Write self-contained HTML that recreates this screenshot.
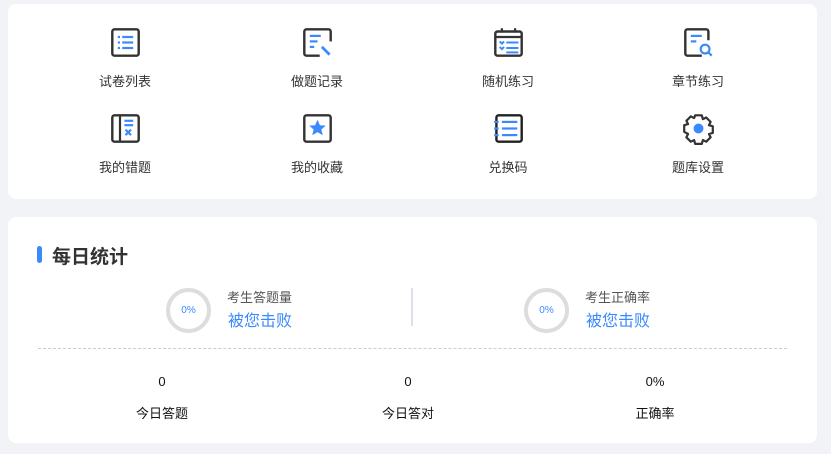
<!DOCTYPE html><html><head><meta charset="utf-8"><style>
body{margin:0;width:831px;height:454px;background:#f2f3f7;font-family:"Liberation Sans","Noto Sans CJK SC",sans-serif;position:relative;overflow:hidden}
.card{position:absolute;left:8px;width:809px;background:#fff;border-radius:8px}
.it{position:absolute;width:120px;text-align:center;font-size:13px;color:#333}
.it svg{display:block;margin:0 auto 12px}
.a{position:absolute}
</style></head><body>
<div class="card" style="top:4px;height:195px"></div>
<div class="card" style="top:217px;height:226px"></div>

<div class="it" style="left:65px;top:26px"><svg width="33" height="33" viewBox="0 0 30 30"><rect x="3" y="3" width="24" height="24" rx="2" fill="none" stroke="#333" stroke-width="2.2"/><g stroke="#3a8afe" stroke-width="2"><line x1="8" y1="10" x2="10" y2="10"/><line x1="12" y1="10" x2="22" y2="10"/><line x1="8" y1="15" x2="10" y2="15"/><line x1="12" y1="15" x2="22" y2="15"/><line x1="8" y1="20" x2="10" y2="20"/><line x1="12" y1="20" x2="22" y2="20"/></g></svg>试卷列表</div>
<div class="it" style="left:257px;top:26px"><svg width="33" height="33" viewBox="0 0 30 30"><path d="M27 14V5a2 2 0 0 0-2-2H5a2 2 0 0 0-2 2v20a2 2 0 0 0 2 2h12" fill="none" stroke="#333" stroke-width="2.2"/><g stroke="#3a8afe" stroke-width="2"><line x1="8" y1="9" x2="18" y2="9"/><line x1="8" y1="14" x2="15" y2="14"/><line x1="8" y1="19" x2="12" y2="19"/><line x1="19" y1="19" x2="26" y2="26" stroke-width="2.5"/></g></svg>做题记录</div>
<div class="it" style="left:448px;top:26px"><svg width="33" height="33" viewBox="0 0 30 30"><rect x="3" y="5" width="24" height="22" rx="2" fill="none" stroke="#333" stroke-width="2.2"/><g stroke="#333" stroke-width="2"><line x1="9" y1="2" x2="9" y2="6"/><line x1="21" y1="2" x2="21" y2="6"/><line x1="3" y1="10" x2="27" y2="10"/></g><g stroke="#3a8afe" stroke-width="1.8" fill="none"><path d="M7 14l2 2 2-2M7 19l2 2 2-2"/><line x1="13" y1="15" x2="24" y2="15"/><line x1="13" y1="20" x2="24" y2="20"/><line x1="13" y1="24" x2="24" y2="24"/></g></svg>随机练习</div>
<div class="it" style="left:638px;top:26px"><svg width="33" height="33" viewBox="0 0 30 30"><path d="M18 27H5a2 2 0 0 1-2-2V5a2 2 0 0 1 2-2h17a2 2 0 0 1 2 2v8" fill="none" stroke="#333" stroke-width="2.2"/><g stroke="#3a8afe" stroke-width="2" fill="none"><line x1="8" y1="9" x2="18" y2="9"/><line x1="8" y1="14" x2="13" y2="14"/><circle cx="21" cy="21" r="4"/><line x1="24" y1="24" x2="27" y2="27"/></g></svg>章节练习</div>

<div class="it" style="left:65px;top:112px"><svg width="33" height="33" viewBox="0 0 30 30"><rect x="3" y="3" width="24" height="24" rx="2" fill="none" stroke="#333" stroke-width="2.2"/><line x1="10" y1="3" x2="10" y2="27" stroke="#333" stroke-width="2"/><g stroke="#3a8afe" stroke-width="2"><line x1="14" y1="8" x2="22" y2="8"/><line x1="14" y1="12" x2="22" y2="12"/><path d="M15 16l5 5M20 16l-5 5"/></g></svg>我的错题</div>
<div class="it" style="left:257px;top:112px"><svg width="33" height="33" viewBox="0 0 30 30"><rect x="3" y="3" width="24" height="24" rx="2" fill="none" stroke="#333" stroke-width="2.2"/><path d="M15 7l2.2 5 5.3.4-4 3.5 1.3 5.2L15 18.3l-4.8 2.8 1.3-5.2-4-3.5 5.3-.4z" fill="#3a8afe"/></svg>我的收藏</div>
<div class="it" style="left:448px;top:112px"><svg width="33" height="33" viewBox="0 0 30 30"><rect x="4" y="3" width="23" height="24" rx="2" fill="none" stroke="#222" stroke-width="2.2"/><g stroke="#3a8afe" stroke-width="2"><line x1="2" y1="9" x2="6" y2="9"/><line x1="2" y1="15" x2="6" y2="15"/><line x1="2" y1="21" x2="6" y2="21"/><line x1="9" y1="9" x2="23" y2="9"/><line x1="9" y1="15" x2="23" y2="15"/><line x1="9" y1="21" x2="23" y2="21"/></g></svg>兑换码</div>
<div class="it" style="left:638px;top:112px"><svg width="33" height="33" viewBox="0 0 30 30"><path d="M12 3h6l1 3.5 3-1.5 4 4-1.5 3 3.5 1v6l-3.5 1 1.5 3-4 4-3-1.5-1 3.5h-6l-1-3.5-3 1.5-4-4 1.5-3L2 18v-6l3.5-1L4 8l4-4 3 1.5z" fill="none" stroke="#333" stroke-width="2" stroke-linejoin="round"/><circle cx="15" cy="15" r="4.5" fill="#3a8afe"/></svg>题库设置</div>

<div class="a" style="left:37px;top:246px;width:5px;height:17px;background:#3a8afe;border-radius:3px"></div>
<div class="a" style="left:52px;top:242px;font-size:19px;font-weight:bold;color:#333">每日统计</div>

<div class="a" style="left:166px;top:288px;width:37px;height:37px;border:4px solid #ddd;border-radius:50%;text-align:center;line-height:37px;font-size:10px;color:#3a8afe">0%</div>
<div class="a" style="left:227px;top:287px;font-size:13px;color:#555">考生答题量</div>
<div class="a" style="left:228px;top:307px;font-size:16px;color:#3a8afe">被您击败</div>
<div class="a" style="left:411px;top:288px;width:2px;height:38px;background:#dde0e8"></div>
<div class="a" style="left:524px;top:288px;width:37px;height:37px;border:4px solid #ddd;border-radius:50%;text-align:center;line-height:37px;font-size:10px;color:#3a8afe">0%</div>
<div class="a" style="left:585px;top:287px;font-size:13px;color:#555">考生正确率</div>
<div class="a" style="left:586px;top:307px;font-size:16px;color:#3a8afe">被您击败</div>
<div class="a" style="left:38px;top:348px;width:749px;border-top:1px dashed #ccc"></div>

<div class="a" style="left:112px;top:374px;width:100px;text-align:center;font-size:13px;color:#111">0</div>
<div class="a" style="left:112px;top:403px;width:100px;text-align:center;font-size:13px;color:#111">今日答题</div>
<div class="a" style="left:358px;top:374px;width:100px;text-align:center;font-size:13px;color:#111">0</div>
<div class="a" style="left:358px;top:403px;width:100px;text-align:center;font-size:13px;color:#111">今日答对</div>
<div class="a" style="left:605px;top:374px;width:100px;text-align:center;font-size:13px;color:#111">0%</div>
<div class="a" style="left:605px;top:403px;width:100px;text-align:center;font-size:13px;color:#111">正确率</div>
</body></html>
